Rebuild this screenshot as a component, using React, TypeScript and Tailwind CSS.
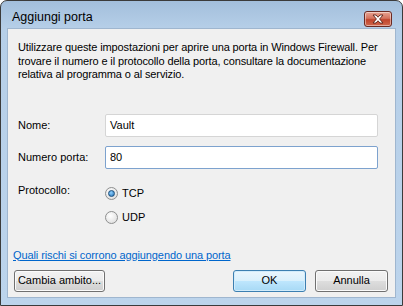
import React from "react";

const FONT = "font-['Segoe_UI','Liberation_Sans',Arial,sans-serif]";

function CloseButton() {
  return (
    <div className="mr-[10px] mt-[10px] flex h-[16px] w-[28px] items-center justify-center rounded-[3px] border border-[#6b2a22] bg-[linear-gradient(#e8a493_0%,#d4735e_45%,#c0442c_55%,#d0684d_100%)] shadow-[inset_0_0_0_1px_rgba(255,255,255,0.45)]">
      <svg width="14" height="10" viewBox="0 0 14 10">
        <path
          d="M2 1 L5 1 L7 3.2 L9 1 L12 1 L8.6 5 L12 9 L9 9 L7 6.8 L5 9 L2 9 L5.4 5 Z"
          fill="#ffffff"
          stroke="#5a2218"
          strokeWidth="0.9"
          strokeLinejoin="round"
        />
      </svg>
    </div>
  );
}

function TextField({ value, focused }: { value: string; focused?: boolean }) {
  return (
    <div
      className={
        "flex h-[23px] w-[273px] items-center rounded-[2px] border bg-white px-[4px] text-[11px] text-black " +
        (focused ? "border-[#7da2ce]" : "border-[#d5d5d5]")
      }
    >
      {value}
    </div>
  );
}

function Radio({ label, checked }: { label: string; checked?: boolean }) {
  return (
    <div className="flex h-[14px] items-center gap-[4px]">
      <div className="flex h-[13px] w-[13px] items-center justify-center rounded-full border border-[#8e8f8f] bg-[radial-gradient(circle_at_40%_35%,#ffffff,#d8d8d8)]">
        {checked && (
          <div className="h-[7px] w-[7px] rounded-full border border-[#1b4e7a] bg-[radial-gradient(circle_at_40%_35%,#8fd1ff,#1f6cb3)]" />
        )}
      </div>
      <span className="text-[11px] text-black">{label}</span>
    </div>
  );
}

function Button({ label, width, primary }: { label: string; width: string; primary?: boolean }) {
  return (
    <div
      className={
        "flex h-[22px] shrink-0 items-center justify-center whitespace-nowrap rounded-[3px] border text-[11px] text-black " +
        width +
        " " +
        (primary
          ? "border-[#3c7fb1] bg-[linear-gradient(#eaf6fd_0%,#d9f0fc_50%,#bee6fd_51%,#a7d9f5_100%)] shadow-[inset_0_0_0_1px_#d2ecfb]"
          : "border-[#707070] bg-[linear-gradient(#f2f2f2_0%,#ebebeb_50%,#dddddd_51%,#cfcfcf_100%)] shadow-[inset_0_0_0_1px_#fbfbfb]")
      }
    >
      {label}
    </div>
  );
}

export default function App() {
  return (
    <div className={"h-[306px] w-[403px] overflow-hidden bg-white " + FONT}>
      <div className="flex h-full w-full flex-col rounded-t-[7px] border border-[#3b3b3b] bg-[linear-gradient(#a3bfdc_0px,#b6cfe8_28px,#bcd4ec_100%)]">
        {/* title bar */}
        <div className="flex h-[27px] shrink-0 items-start justify-between">
          <div className="pl-[11px] pt-[9px] text-[12.5px] leading-[15px] text-black">Aggiungi porta</div>
          <CloseButton />
        </div>

        {/* client area */}
        <div className="mx-[6px] mb-[7px] flex min-h-0 flex-1 flex-col border border-[#9fb6cf] bg-[#f0f0f0] px-[10px] whitespace-nowrap">
          <p className="mt-[12px] text-[11px] leading-[13.5px] tracking-[-0.12px] text-black">
            Utilizzare queste impostazioni per aprire una porta in Windows Firewall. Per
            <br />
            trovare il numero e il protocollo della porta, consultare la documentazione
            <br />
            relativa al programma o al servizio.
          </p>

          <div className="mt-[32px] flex items-center">
            <span className="w-[87px] text-[11px] text-black">Nome:</span>
            <TextField value="Vault" />
          </div>
          <div className="mt-[9px] flex items-center">
            <span className="w-[87px] text-[11px] text-black">Numero porta:</span>
            <TextField value="80" focused />
          </div>

          <div className="mt-[14px] flex items-start">
            <span className="w-[87px] text-[11px] leading-[14px] text-black">Protocollo:</span>
            <div className="mt-[4px] flex flex-col gap-[10px]">
              <Radio label="TCP" checked />
              <Radio label="UDP" />
            </div>
          </div>

          <a className="-ml-[5px] mt-[23px] text-[11px] leading-[14px] tracking-[-0.1px] text-[#0066cc] underline">
            Quali rischi si corrono aggiungendo una porta
          </a>

          <div className="mt-[8px] flex items-center">
            <div className="-ml-[4px]">
              <Button label="Cambia ambito..." width="w-[91px]" />
            </div>
            <div className="ml-auto mr-[-3px] flex gap-[9px]">
              <Button label="OK" width="w-[73px]" primary />
              <Button label="Annulla" width="w-[73px]" />
            </div>
          </div>
        </div>
      </div>
    </div>
  );
}
